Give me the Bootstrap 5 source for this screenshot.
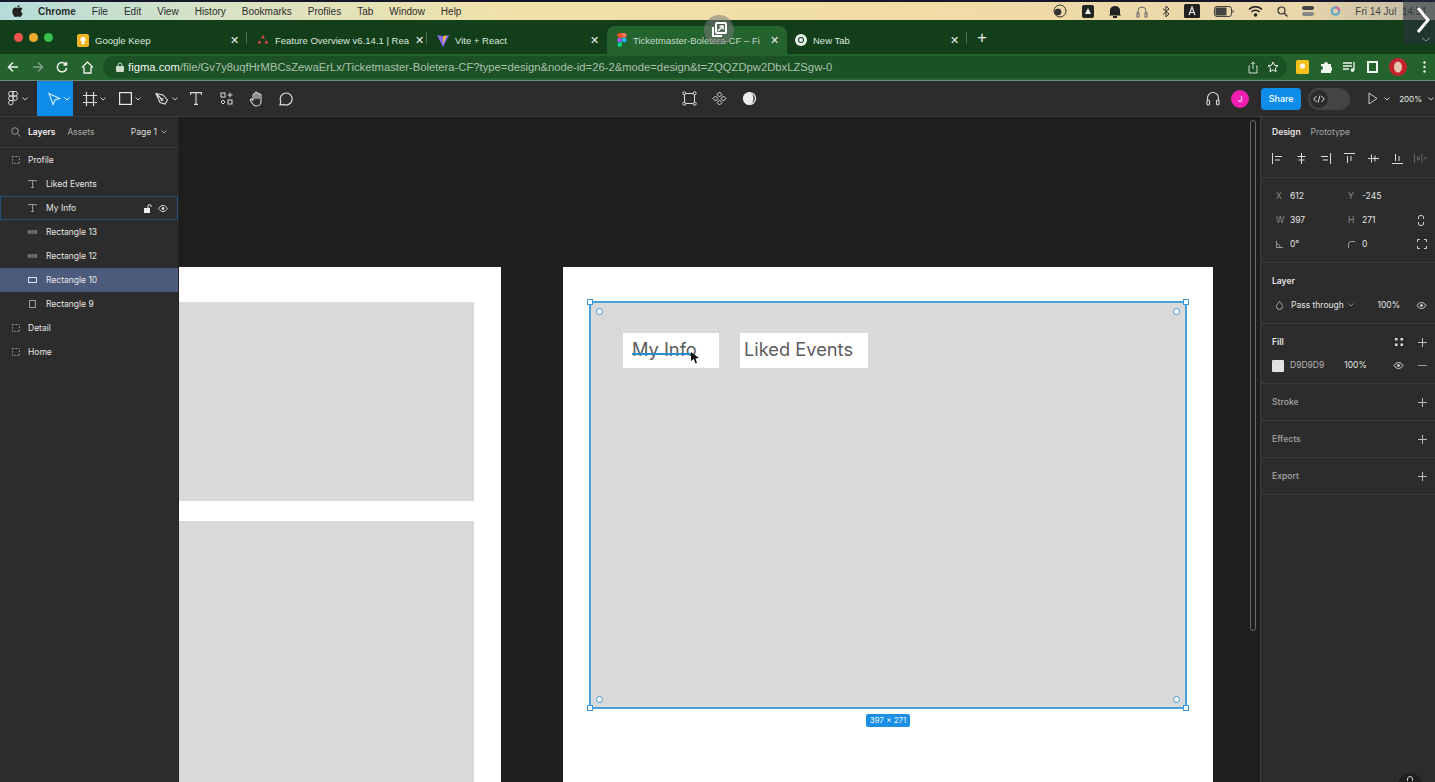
<!DOCTYPE html>
<html lang="en">

<head>
  <meta charset="UTF-8">
  <meta name="viewport" content="width=device-width, initial-scale=1.0">
  <title>Ticketmaster-Boletera-CF – Figma</title>
  <link href="https://cdn.jsdelivr.net/npm/bootstrap@5.3.0/dist/css/bootstrap.min.css" rel="stylesheet">
  <style>
    html, body { height: 100%; overflow: hidden; }
    body { background: #1e1e1e; font-family: Inter, "Liberation Sans", sans-serif; }
    svg { display: block; flex: none; }
    .shot { width: 1435px; height: 782px; position: relative; overflow: hidden; }

    /* mac menu bar */
    .macbar { height: 20px; border-top: 2px solid #16162a; padding-left: 12px; font: 10px "Liberation Sans", sans-serif; color: #2c2c2c;
      background: linear-gradient(90deg, #b4dcda 0, #d6e2c6 200px, #f0e2aa 500px, #f2dca6 900px, #e9d6aa 1300px, #bdb9a8 1435px); }
    .macbar .menus { gap: 16px; }
    .macbar b { font-size: 10px; margin-left: 15px; }
    .status { position: absolute; top: 0; right: 8px; height: 18px; color: #444; }
    .status svg { margin-right: 14px; }

    /* chrome tabs */
    .tabstrip { height: 34px; background: #123f1a; padding-left: 14px; color: #dfe8df; font: 9.5px "Liberation Sans", sans-serif; }
    .lights { gap: 6px; width: 53px; }
    .lights i { width: 9px; height: 9px; border-radius: 50%; }
    .tabitem { width: 180px; height: 28px; margin-top: 6px; padding: 0 6px 0 10px; gap: 6px; border-radius: 8px 8px 0 0; position: relative; }
    .tabitem span { flex: 1; white-space: nowrap; }
    .tabitem em { font-style: normal; font-size: 11px; color: #e8efe8; margin-right: 2px; }
    .tabitem.sep::after { content: ""; position: absolute; right: 0; top: 6px; bottom: 10px; width: 1px; background: #4d6f52; }
    .tabitem.active { background: #24622e; color: #c9dccb; }
    .tabitem.newtab { padding-left: 8px; }
    .plus-tab { color: #eef4ee; font-size: 17px; margin-left: 10px; line-height: 1; }

    /* chrome address row */
    .addrrow { height: 27px; background: #24622e; border-bottom: 1px solid #6e8a72; padding-left: 7px; }
    .navbtns { gap: 12.5px; width: 96px; }
    .omni { width: 1184px; height: 22px; border-radius: 11px; background: #1c5025; padding: 0 8px 0 25px; font: 11.25px "Liberation Sans", sans-serif; color: #a9c3ad; position: relative; }
    .omni strong { color: #f2f5f2; font-weight: 400; }
    .omni .url { flex: 1; white-space: nowrap; overflow: hidden; }
    .exts { gap: 11px; padding-left: 9px; }
    .exts .dotsmenu { margin-left: 5px; }

    /* figma toolbar */
    .figbar { height: 36px; background: #2c2c2c; display: grid; grid-template-columns: 1fr auto 1fr; border-bottom: 1px solid #3b3b3b; }
    .toolb { height: 35px; width: 36px; padding-left: 10px; gap: 3px; }
    .toolb.logo { width: 37px; padding-left: 7px; }
    .toolb.on { background: #0d8ce9; }
    .toolb.plain { width: 30px; padding-left: 0; justify-content: center; }
    .midtools { gap: 15px; padding-left: 4px; }
    .rtools { justify-content: flex-end; font-size: 8px; color: #eee; padding-right: 1px; }
    .jdot { width: 18px; height: 18px; border-radius: 50%; background: #f01fb2; color: #fff; font-size: 8px; margin-left: 11px; }
    .sharebtn { width: 40px; height: 22px; background: #0d8ce9; color: #fff; border-radius: 4px; font-size: 9px; font-weight: 500; margin-left: 12px; }
    .devtoggle { width: 42px; height: 22px; border-radius: 11px; background: #444; margin-left: 7px; margin-right: 18px; padding-left: 2px; }
    .devtoggle span { width: 18px; height: 18px; border-radius: 50%; background: #2c2c2c; }
    .zoomval { margin-left: 9px; margin-right: 6px; }

    /* panels */
    .workarea { height: 665px; }
    .leftpanel { width: 179px; background: #2c2c2c; color: #e6e6e6; font-size: 8.5px; border-right: 1px solid #222; flex: none; z-index: 3; }
    .panelhead { height: 31px; border-bottom: 1px solid #3b3b3b; padding-left: 11px; }
    .panelhead .tabon { font-weight: 600; color: #f2f2f2; margin-left: 7px; }
    .panelhead .taboff { color: #a8a8a8; margin-left: 12px; }
    .panelhead .pagepick { margin-left: auto; margin-right: 11px; color: #ddd; gap: 4px; }
    .layerrow { height: 24px; gap: 8px; padding-left: 12px; }
    .layerrow.child { padding-left: 28px; gap: 9px; }
    .layerrow.hover { box-shadow: inset 0 0 0 1px #27517a; }
    .layerrow.picked { background: #4c5a7c; }
    .layerrow .tail { margin-left: auto; margin-right: 10px; gap: 6px; }

    .canvasarea { flex: 1; position: relative; background: #1e1e1e; overflow: hidden; }
    .sheet { position: absolute; background: #fff; }
    .grayblock { position: absolute; background: #d9d9d9; }
    .scrolltrack { position: absolute; left: 1071px; top: 3px; width: 6px; height: 511px; border: 1px solid #6a6a6a; border-radius: 3px; }
    .pickbox { position: absolute; left: 410px; top: 184px; width: 598px; height: 408px; background: #d9d9d9; border: 2px solid #4aa0da; }
    .tabbox { position: absolute; top: 30px; height: 35px; background: #fff; color: #5c5c5c; font-size: 18.25px; line-height: 32px; white-space: nowrap; }
    .drawline { position: absolute; left: 41px; top: 50px; width: 60px; height: 2px; background: #2a8fd0; }
    .cursorptr { position: absolute; left: 99px; top: 49px; }
    .sqh { position: absolute; width: 6px; height: 6px; background: #fff; border: 1px solid #3a9ad9; }
    .rndh { position: absolute; width: 7px; height: 7px; border-radius: 50%; background: #fff; border: 1px solid #3a9ad9; }
    .sizetag { position: absolute; left: 687px; top: 597px; width: 44px; height: 13px; background: #1a8fe3; color: #e8f4fd; font-size: 8px; line-height: 13px; text-align: center; border-radius: 2px; }

    .rightpanel { width: 175px; background: #2c2c2c; border-left: 1px solid #3b3b3b; color: #e4e4e4; font-size: 8.5px; flex: none; }
    .rhead { height: 31px; padding-left: 11px; gap: 10px; }
    .rhead b { font-weight: 600; }
    .rhead span { color: #a8a8a8; }
    .alignrow { height: 30px; padding: 0 0 9px 11px; gap: 13px; border-bottom: 1px solid #3b3b3b; }
    .geomblock { height: 85px; padding-top: 6px; border-bottom: 1px solid #3b3b3b; }
    .geomrow { height: 24px; position: relative; }
    .geomrow .lab { position: absolute; left: 15px; color: #8d8d8d; }
    .geomrow .val { position: absolute; left: 29px; }
    .geomrow .lab2 { position: absolute; left: 87px; color: #8d8d8d; }
    .geomrow .val2 { position: absolute; left: 101px; }
    .geomrow svg { position: absolute; }
    .secthead { height: 37px; padding: 0 8px 0 11px; border-bottom: 1px solid #3b3b3b; font-weight: 600; color: #9b9b9b; }
    .secthead.lit { border-bottom: 0; color: #e6e6e6; height: 30px; padding-top: 6px; }
    .propline { height: 31px; padding: 0 8px 6px 15px; border-bottom: 1px solid #3b3b3b; }
    .propline.fillrow { height: 30px; }
    .swatch { width: 12px; height: 12px; background: #e3e3e3; border-radius: 1px; margin: 0 -2px 0 -4px; }
    .helpdot { position: absolute; left: 1398px; top: 773px; width: 24px; height: 24px; border-radius: 50%; background: #1e1e1e; z-index: 6; padding: 3px 0 0 9px; }

    /* video overlays */
    .popbtn { position: absolute; left: 704px; top: 15px; width: 30px; height: 30px; border-radius: 50%; background: rgba(120,120,120,.55); z-index: 6; }
    .nextbtn { position: absolute; right: 0; top: 0; width: 32px; height: 44px; background: rgba(40,50,60,.6); z-index: 6; padding-left: 13px; }
  </style>
</head>

<body>
  <div class="shot">
    <!-- video overlay controls -->
    <div class="popbtn d-flex align-items-center justify-content-center">
      <svg width="18" height="18" viewBox="0 0 18 18" fill="none" stroke="#fff" stroke-width="2"><rect x="6" y="2" width="10" height="10" rx="1"/><path d="M3 6v9h9"/><path d="M8 10l5-5M9.500 5H13v3.500" stroke-width="1.500"/></svg>
    </div>
    <div class="nextbtn">
      <svg width="19" height="44" viewBox="0 0 19 44" fill="none" stroke="#fff"><path d="M2 8l10 12L2 32" stroke-width="3"/><path d="M6 38l4 3 4-3" stroke="#8a8f95" stroke-width="1"/></svg>
    </div>
    <div class="helpdot">
      <svg width="6" height="6" viewBox="0 0 6 6" fill="none" stroke="#ccc"><path d="M.5 5V3a2.500 2.500 0 0 1 5 0v2"/></svg>
    </div>

    <!-- mac menu bar -->
    <div class="macbar d-flex align-items-center position-relative">
      <svg width="11" height="12" viewBox="0 0 12 14" fill="#222"><path d="M8.400 0c.1 1.500-1.200 3-2.700 2.900C5.500 1.500 7 .1 8.400 0zM6 3.800c.7 0 1.600-.8 3-.8.600 0 2 .2 2.800 1.500-2.300 1.400-1.900 4.600.2 5.500-.5 1.400-1.900 4-3.200 4-.9 0-1.300-.6-2.500-.6s-1.700.6-2.500.6C2.200 14 0 10.500 0 7.500 0 4.600 1.900 3 3.500 3c1 0 1.900.8 2.500.8z"/></svg>
      <div class="menus d-flex align-items-center">
        <b>Chrome</b><span>File</span><span>Edit</span><span>View</span><span>History</span><span>Bookmarks</span><span>Profiles</span><span>Tab</span><span>Window</span><span>Help</span>
      </div>
      <div class="status d-flex align-items-center">
        <svg width="16" height="14" viewBox="0 0 16 14" fill="none" stroke="#333"><circle cx="8" cy="7" r="6"/><circle cx="6" cy="8" r="3" fill="#333"/></svg>
        <svg width="12" height="13" viewBox="0 0 12 13"><rect width="12" height="13" rx="2" fill="#222"/><path d="M6 3l3 6H3z" fill="#eee"/></svg>
        <svg width="14" height="13" viewBox="0 0 14 13"><path d="M2 9V5a5 4 0 0 1 10 0v4l1 1.500H1z" fill="#222"/><rect x="5" y="11" width="4" height="2" fill="#222"/></svg>
        <svg width="12" height="13" viewBox="0 0 12 13" fill="none" stroke="#666"><path d="M2 9V6a4 4 0 0 1 8 0v3"/><rect x="1" y="8" width="2" height="4"/><rect x="9" y="8" width="2" height="4"/></svg>
        <svg width="8" height="13" viewBox="0 0 8 13" fill="none" stroke="#333"><path d="M1 3.500l6 5.500-3 3V1l3 3-6 5.500"/></svg>
        <svg width="16" height="14" viewBox="0 0 16 14"><rect width="16" height="14" rx="1.500" fill="#222"/><path d="M5 11l3-8 3 8M6 8.500h4" fill="none" stroke="#eee" stroke-width="1.200"/></svg>
        <svg width="20" height="11" viewBox="0 0 20 11" fill="none" stroke="#444"><rect x=".5" y=".5" width="17" height="10" rx="2.500"/><rect x="2" y="2" width="10" height="7" fill="#444"/><path d="M19 4v3"/></svg>
        <svg width="15" height="11" viewBox="0 0 15 11" fill="none" stroke="#222" stroke-width="1.500"><path d="M1 3.500a9 9 0 0 1 13 0M3.500 6a5.500 5.500 0 0 1 8 0"/><circle cx="7.500" cy="9" r="1" fill="#222"/></svg>
        <svg width="11" height="11" viewBox="0 0 11 11" fill="none" stroke="#333" stroke-width="1.200"><circle cx="4.500" cy="4.500" r="3.500"/><path d="M7 7l3.500 3.500"/></svg>
        <svg width="14" height="12" viewBox="0 0 14 12"><rect y="1" width="12" height="4" rx="2" fill="#444"/><rect y="7" width="12" height="4" rx="2" fill="#888"/><circle cx="13.500" cy="9" r="1" fill="#eeb640"/></svg>
        <svg width="11" height="12" viewBox="0 0 12 12" fill="none" stroke-width="2.500"><circle cx="6" cy="6" r="4" stroke="#5fa8c8"/><path d="M6 2a4 4 0 0 1 4 4" stroke="#d56a9a"/></svg>
        <span>Fri 14 Jul&nbsp; 14:51</span>
      </div>
    </div>

    <!-- chrome tabs -->
    <div class="tabstrip d-flex align-items-center">
      <div class="lights d-flex align-items-center">
        <i style="background:#ef5350"></i><i style="background:#f0ad2e"></i><i style="background:#37c24d"></i>
      </div>
      <div class="tabitem sep d-flex align-items-center">
        <svg width="12" height="13" viewBox="0 0 12 13"><rect width="12" height="13" rx="2" fill="#f3b423"/><circle cx="6" cy="5.500" r="2.500" fill="#fff"/><rect x="4.700" y="8" width="2.600" height="2" fill="#fff"/></svg>
        <span>Google Keep</span><em>✕</em>
      </div>
      <div class="tabitem sep d-flex align-items-center">
        <svg width="12" height="10" viewBox="0 0 12 10" fill="#e0474c"><path d="M6 0l2 3.500H4zM2.500 5l2 3.500h-4zM9.500 5l2 3.500h-4z"/></svg>
        <span>Feature Overview v6.14.1 | Rea</span><em>✕</em>
      </div>
      <div class="tabitem d-flex align-items-center">
        <svg width="12" height="13" viewBox="0 0 12 13"><path d="M0 1l6 1.200L12 1 6 13z" fill="#8a6cf0"/><path d="M6.500 2l3-.6L6 10z" fill="#ffc92e"/></svg>
        <span>Vite + React</span><em>✕</em>
      </div>
      <div class="tabitem active d-flex align-items-center">
        <svg width="10" height="14" viewBox="0 0 10 15"><circle cx="7.500" cy="7.500" r="2.500" fill="#1abcfe"/><path d="M2.500 10H5v2.500a2.500 2.500 0 1 1-2.500-2.500z" fill="#0acf83"/><rect y="5" width="5" height="5" rx="2.500" fill="#a259ff"/><path d="M2.500 0H5v5H2.500a2.500 2.500 0 0 1 0-5z" fill="#f24e1e"/><path d="M5 0h2.500a2.500 2.500 0 0 1 0 5H5z" fill="#ff7262"/></svg>
        <span>Ticketmaster-Boletera-CF – Fi</span><em>✕</em>
      </div>
      <div class="tabitem newtab sep d-flex align-items-center">
        <svg width="12" height="12" viewBox="0 0 12 12"><circle cx="6" cy="6" r="6" fill="#e8efe8"/><circle cx="6" cy="6" r="3" fill="#123f1a"/><circle cx="6" cy="6" r="2" fill="#e8efe8"/></svg>
        <span>New Tab</span><em>✕</em>
      </div>
      <span class="plus-tab">+</span>
    </div>

    <!-- chrome address row -->
    <div class="addrrow d-flex align-items-center">
      <div class="navbtns d-flex align-items-center">
        <svg width="12" height="12" viewBox="0 0 12 12" fill="none" stroke="#eef4ee" stroke-width="1.500"><path d="M11 6H1.500M6 1.500L1.500 6 6 10.500"/></svg>
        <svg width="12" height="12" viewBox="0 0 12 12" fill="none" stroke="#7fa085" stroke-width="1.500"><path d="M1 6h9.500M6 1.500L10.500 6 6 10.500"/></svg>
        <svg width="12" height="12" viewBox="0 0 12 12" fill="none" stroke="#eef4ee" stroke-width="1.500"><path d="M10 3.500A4.700 4.700 0 1 0 10.700 7"/><path d="M10.500 1v3h-3" fill="#eef4ee"/></svg>
        <svg width="13" height="13" viewBox="0 0 13 13" fill="none" stroke="#eef4ee" stroke-width="1.300"><path d="M1 6.500L6.500 1 12 6.500M3 6v6h7V6"/></svg>
      </div>
      <div class="omni d-flex align-items-center">
        <svg class="position-absolute" style="left:13px" width="8" height="10" viewBox="0 0 8 10"><rect y="4" width="8" height="6" rx="1" fill="#cfdccf"/><path d="M2 4V3a2 2 0 0 1 4 0v1" fill="none" stroke="#cfdccf"/></svg>
        <span class="url"><strong>figma.com</strong>/file/Gv7y8uqfHrMBCsZewaErLx/Ticketmaster-Boletera-CF?type=design&amp;node-id=26-2&amp;mode=design&amp;t=ZQQZDpw2DbxLZSgw-0</span>
        <svg class="me-2" width="12" height="13" viewBox="0 0 12 13" fill="none" stroke="#cfdccf"><path d="M3 5H2v7h8V5H9M6 8V1M4 3l2-2 2 2"/></svg>
        <svg width="12" height="12" viewBox="0 0 12 12" fill="none" stroke="#eef4ee"><path d="M6 1l1.500 3.300 3.500.4-2.600 2.400.7 3.600L6 8.900l-3.100 1.800.7-3.600L1 4.700l3.500-.4z"/></svg>
      </div>
      <div class="exts d-flex align-items-center">
        <svg width="13" height="14" viewBox="0 0 13 14"><rect width="13" height="14" rx="1.500" fill="#f3c11e"/><circle cx="6.500" cy="6" r="2.500" fill="#fff"/></svg>
        <svg width="12" height="12" viewBox="0 0 12 12" fill="#eef4ee"><path d="M1 3h3a2 2 0 0 1 4 0h3v3a2 2 0 0 1 0 4v2H1V9a2 2 0 0 0 0-4z"/></svg>
        <svg width="13" height="12" viewBox="0 0 13 12" fill="none" stroke="#eef4ee" stroke-width="1.300"><path d="M0 2h9M0 5h9M0 8h6M11 1v8"/><circle cx="9.500" cy="9" r="1.200" fill="#eef4ee"/></svg>
        <svg width="11" height="12" viewBox="0 0 11 12" fill="none" stroke="#eef4ee" stroke-width="2"><rect x="1" y="1" width="9" height="10"/></svg>
        <svg width="18" height="18" viewBox="0 0 18 18"><circle cx="9" cy="9" r="9" fill="#c5222d"/><ellipse cx="9" cy="9" rx="4" ry="5.500" fill="#e3c4ac"/></svg>
        <svg class="dotsmenu" width="3" height="12" viewBox="0 0 3 12" fill="#eef4ee"><circle cx="1.500" cy="1.500" r="1.200"/><circle cx="1.500" cy="6" r="1.200"/><circle cx="1.500" cy="10.500" r="1.200"/></svg>
      </div>
    </div>

    <!-- figma toolbar -->
    <div class="figbar">
      <div class="d-flex align-items-center">
        <div class="toolb logo d-flex align-items-center">
          <svg width="12" height="15" viewBox="0 0 10 15" fill="none" stroke="#ddd"><path d="M5 .5H2.800a2.200 2.200 0 0 0 0 4.500H5zM5 .5h2.200a2.200 2.200 0 0 1 0 4.500H5zM5 5H2.800a2.200 2.200 0 0 0 0 4.500H5zM5 9.500H2.800A2.200 2.200 0 1 0 5 12z"/><circle cx="7.200" cy="7.200" r="2.200"/></svg>
          <svg width="6" height="4" viewBox="0 0 6 4" fill="none" stroke="#ccc"><path d="M.5.500L3 3 5.500.5"/></svg>
        </div>
        <div class="toolb on d-flex align-items-center">
          <svg width="14" height="14" viewBox="0 0 14 14" fill="none" stroke="#cfe8fb" stroke-width="1.200"><path d="M2 1.500l10.500 5-4.500 1.500-2 4.500z"/></svg>
          <svg width="6" height="4" viewBox="0 0 6 4" fill="none" stroke="#e8f4fd"><path d="M.5.500L3 3 5.500.5"/></svg>
        </div>
        <div class="toolb d-flex align-items-center">
          <svg width="14" height="14" viewBox="0 0 14 14" fill="none" stroke="#ddd" stroke-width="1.200"><path d="M3.500 0v14M10.500 0v14M0 3.500h14M0 10.500h14"/></svg>
          <svg width="6" height="4" viewBox="0 0 6 4" fill="none" stroke="#ccc"><path d="M.5.500L3 3 5.500.5"/></svg>
        </div>
        <div class="toolb d-flex align-items-center">
          <svg width="13" height="13" viewBox="0 0 13 13" fill="none" stroke="#e8e8e8" stroke-width="1.200"><rect x=".6" y=".6" width="11.800" height="11.800"/></svg>
          <svg width="6" height="4" viewBox="0 0 6 4" fill="none" stroke="#ccc"><path d="M.5.500L3 3 5.500.5"/></svg>
        </div>
        <div class="toolb d-flex align-items-center">
          <svg width="14" height="14" viewBox="0 0 14 14" fill="none" stroke="#ddd" stroke-width="1.100"><path d="M1 1.500l7 1.500 4.500 5-2.500 4-5-1.500zM1 1.500L6.500 7"/><circle cx="7" cy="7.500" r="1"/></svg>
          <svg width="6" height="4" viewBox="0 0 6 4" fill="none" stroke="#ccc"><path d="M.5.500L3 3 5.500.5"/></svg>
        </div>
        <div class="toolb plain d-flex align-items-center">
          <svg width="12" height="13" viewBox="0 0 12 13" fill="none" stroke="#ddd" stroke-width="1.100"><path d="M.6 3V.6h10.800V3M6 .6v11.800M4 12.400h4"/></svg>
        </div>
        <div class="toolb plain d-flex align-items-center">
          <svg width="13" height="13" viewBox="0 0 13 13" fill="none" stroke="#ddd"><rect x="1" y="1" width="4" height="4"/><path d="M10 .5v5M7.500 3h5"/><path d="M3 8l2 2-2 2-2-2z"/><rect x="8" y="8" width="4" height="4"/></svg>
        </div>
        <div class="toolb plain d-flex align-items-center">
          <svg width="15" height="16" viewBox="0 0 15 16" fill="none" stroke="#ddd" stroke-width="1.100"><path d="M4 9V4a1 1 0 0 1 2 0V2a1 1 0 0 1 2 0v1a1 1 0 0 1 2 0v1a1 1 0 0 1 2 0v6.500A4.500 4.500 0 0 1 7.500 15C5 15 4 13.500 3 12L1.500 9.500C1 8.500 2.500 7.500 3 8.500zM6 4v4M8 3v5M10 4v4"/></svg>
        </div>
        <div class="toolb plain d-flex align-items-center">
          <svg width="14" height="14" viewBox="0 0 14 14" fill="none" stroke="#ddd" stroke-width="1.200"><path d="M7 1a6 6 0 1 1-2.500 11.400L1 13l.8-3.500A6 6 0 0 1 7 1z"/></svg>
        </div>
      </div>
      <div class="midtools d-flex align-items-center">
        <svg width="15" height="15" viewBox="0 0 15 15" fill="none" stroke="#ddd"><rect x="2.500" y="2.500" width="10" height="10"/><rect x=".8" y=".8" width="3" height="3" rx="1.500" fill="#2c2c2c"/><rect x="11.200" y=".8" width="3" height="3" rx="1.500" fill="#2c2c2c"/><rect x=".8" y="11.200" width="3" height="3" rx="1.500" fill="#2c2c2c"/><rect x="11.200" y="11.200" width="3" height="3" rx="1.500" fill="#2c2c2c"/></svg>
        <svg width="15" height="15" viewBox="0 0 15 15" fill="none" stroke="#ddd"><path d="M7.500 1l2.500 2.500-2.500 2.500L5 3.500zM7.500 9l2.500 2.500L7.500 14 5 11.500zM3.500 5L6 7.500 3.500 10 1 7.500zM11.500 5L14 7.500 11.500 10 9 7.500z"/></svg>
        <svg width="15" height="15" viewBox="0 0 15 15"><circle cx="7.500" cy="7.500" r="6" fill="none" stroke="#eee" stroke-width="1.200"/><path d="M7.500 1.500a6 6 0 0 0 0 12 4 6 0 0 0 0-12z" fill="#eee"/></svg>
      </div>
      <div class="rtools d-flex align-items-center">
        <svg width="14" height="15" viewBox="0 0 14 15" fill="none" stroke="#ddd" stroke-width="1.100"><path d="M1.500 10V7a5.500 5.500 0 0 1 11 0v3"/><rect x="1" y="9" width="2.500" height="5" rx="1.200"/><rect x="10.500" y="9" width="2.500" height="5" rx="1.200"/></svg>
        <div class="jdot d-flex align-items-center justify-content-center">J</div>
        <div class="sharebtn d-flex align-items-center justify-content-center">Share</div>
        <div class="devtoggle d-flex align-items-center">
          <span class="d-flex align-items-center justify-content-center"><svg width="12" height="8" viewBox="0 0 12 8" fill="none" stroke="#ddd"><path d="M3.500 1L.8 4l2.700 3M8.500 1l2.700 3-2.700 3M7 .5L5 7.500"/></svg></span>
        </div>
        <svg width="10" height="13" viewBox="0 0 10 13" fill="none" stroke="#ccc"><path d="M1 1l8 5.500L1 12z"/></svg>
        <svg style="margin-left:6px" width="6" height="4" viewBox="0 0 6 4" fill="none" stroke="#ccc"><path d="M.5.500L3 3 5.500.5"/></svg>
        <span class="zoomval">200%</span>
        <svg width="6" height="4" viewBox="0 0 6 4" fill="none" stroke="#ccc"><path d="M.5.500L3 3 5.500.5"/></svg>
      </div>
    </div>

    <div class="workarea d-flex">
      <!-- layers -->
      <div class="leftpanel">
        <div class="panelhead d-flex align-items-center">
          <svg width="10" height="10" viewBox="0 0 10 10" fill="none" stroke="#999"><circle cx="4" cy="4" r="3.300"/><path d="M6.500 6.500L9.500 9.500"/></svg>
          <span class="tabon">Layers</span><span class="taboff">Assets</span>
          <span class="pagepick d-flex align-items-center">Page 1 <svg width="6" height="4" viewBox="0 0 6 4" fill="none" stroke="#aaa"><path d="M.5.500L3 3 5.500.5"/></svg></span>
        </div>
        <div class="layerrow d-flex align-items-center"><svg width="8" height="8" viewBox="0 0 8 8" fill="none" stroke="#999" stroke-dasharray="1.500 1.500"><rect x=".5" y=".5" width="7" height="7"/></svg><span>Profile</span></div>
        <div class="layerrow child d-flex align-items-center"><svg width="9" height="8" viewBox="0 0 9 8" fill="none" stroke="#999"><path d="M.5 1.500V.5h8v1M4.500.5v7M3 7.500h3"/></svg><span>Liked Events</span></div>
        <div class="layerrow child hover d-flex align-items-center"><svg width="9" height="8" viewBox="0 0 9 8" fill="none" stroke="#999"><path d="M.5 1.500V.5h8v1M4.500.5v7M3 7.500h3"/></svg><span>My Info</span>
          <div class="tail d-flex align-items-center">
            <svg width="8" height="9" viewBox="0 0 8 9"><rect y="4" width="6" height="5" fill="#eee"/><path d="M4 4V2a1.500 1.500 0 0 1 3 0v1" fill="none" stroke="#eee"/></svg>
            <svg width="10" height="7" viewBox="0 0 10 7" fill="none" stroke="#ddd"><path d="M.5 3.500C2 1.500 3.500.5 5 .5s3 1 4.500 3C8 5.500 6.500 6.500 5 6.500s-3-1-4.500-3z"/><circle cx="5" cy="3.500" r="1" fill="#ddd"/></svg>
          </div>
        </div>
        <div class="layerrow child d-flex align-items-center"><svg width="9" height="8" viewBox="0 0 9 8"><rect x=".5" y="3" width="8" height="2" fill="none" stroke="#999"/></svg><span>Rectangle 13</span></div>
        <div class="layerrow child d-flex align-items-center"><svg width="9" height="8" viewBox="0 0 9 8"><rect x=".5" y="3" width="8" height="2" fill="none" stroke="#999"/></svg><span>Rectangle 12</span></div>
        <div class="layerrow child picked d-flex align-items-center"><svg width="9" height="8" viewBox="0 0 9 8"><rect x=".5" y="1.500" width="8" height="5" fill="none" stroke="#e0e4ee"/></svg><span>Rectangle 10</span></div>
        <div class="layerrow child d-flex align-items-center"><svg width="9" height="8" viewBox="0 0 9 8"><rect x="1.500" y=".5" width="6" height="7" fill="none" stroke="#999"/></svg><span>Rectangle 9</span></div>
        <div class="layerrow d-flex align-items-center"><svg width="8" height="8" viewBox="0 0 8 8" fill="none" stroke="#999" stroke-dasharray="1.500 1.500"><rect x=".5" y=".5" width="7" height="7"/></svg><span>Detail</span></div>
        <div class="layerrow d-flex align-items-center"><svg width="8" height="8" viewBox="0 0 8 8" fill="none" stroke="#999" stroke-dasharray="1.500 1.500"><rect x=".5" y=".5" width="7" height="7"/></svg><span>Home</span></div>
      </div>

      <!-- canvas: frames sit at free positions here -->
      <div class="canvasarea">
        <div class="sheet" style="left:0;top:150px;width:322px;height:515px"></div>
        <div class="grayblock" style="left:0;top:185px;width:295px;height:199px"></div>
        <div class="grayblock" style="left:0;top:404px;width:295px;height:261px"></div>
        <div class="sheet" style="left:384px;top:150px;width:650px;height:515px"></div>
        <div class="pickbox">
          <div class="tabbox" style="left:32px;width:96px;padding-left:9px">My Info</div>
          <div class="tabbox" style="left:149px;width:128px;padding-left:4px">Liked Events</div>
          <div class="drawline"></div>
          <svg class="cursorptr" width="10" height="12" viewBox="0 0 10 12"><path d="M1 0l8 6-3.500.6L7 11l-1.500.6L3.800 7 1 9z" fill="#111"/></svg>
          <div class="sqh" style="left:-4px;top:-4px"></div>
          <div class="sqh" style="right:-4px;top:-4px"></div>
          <div class="sqh" style="left:-4px;bottom:-4px"></div>
          <div class="sqh" style="right:-4px;bottom:-4px"></div>
          <div class="rndh" style="left:5px;top:5px"></div>
          <div class="rndh" style="right:5px;top:5px"></div>
          <div class="rndh" style="left:5px;bottom:4px"></div>
          <div class="rndh" style="right:5px;bottom:4px"></div>
        </div>
        <div class="sizetag">397 × 271</div>
        <div class="scrolltrack"></div>
      </div>

      <!-- design panel -->
      <div class="rightpanel">
        <div class="rhead d-flex align-items-center"><b>Design</b><span>Prototype</span></div>
        <div class="alignrow d-flex align-items-center">
          <svg width="11" height="11" viewBox="0 0 11 11" fill="none" stroke="#ddd"><path d="M.5 0v11M3 3.500h7M3 7h5"/></svg>
          <svg width="11" height="11" viewBox="0 0 11 11" fill="none" stroke="#ddd"><path d="M5.500 0v11M1.500 3.500h8M2.500 7h6"/></svg>
          <svg width="11" height="11" viewBox="0 0 11 11" fill="none" stroke="#ddd"><path d="M10.500 0v11M1 3.500h7M3 7h5"/></svg>
          <svg width="11" height="11" viewBox="0 0 11 11" fill="none" stroke="#ddd"><path d="M0 .5h11M3.500 3v7M7 3v5"/></svg>
          <svg width="11" height="11" viewBox="0 0 11 11" fill="none" stroke="#ddd"><path d="M0 5.500h11M3.500 1.500v8M7 2.500v6"/></svg>
          <svg width="11" height="11" viewBox="0 0 11 11" fill="none" stroke="#ddd"><path d="M0 10.500h11M3.500 1v7M7 3v5"/></svg>
          <svg width="13" height="9" viewBox="0 0 13 9" fill="none" stroke="#666" style="margin-left:-2px"><path d="M.5 0v9M8 0v9M3.500 3v3h2V3zM10 3l1.500 2L13 3"/></svg>
        </div>
        <div class="geomblock">
          <div class="geomrow d-flex align-items-center">
            <span class="lab">X</span><span class="val">612</span><span class="lab2">Y</span><span class="val2">-245</span>
          </div>
          <div class="geomrow d-flex align-items-center">
            <span class="lab">W</span><span class="val">397</span><span class="lab2">H</span><span class="val2">271</span>
            <svg style="left:157px" width="6" height="11" viewBox="0 0 6 11" fill="none" stroke="#ccc"><path d="M.5 4V2a2.500 1.500 0 0 1 5 0v2M.5 7v2a2.500 1.500 0 0 0 5 0V7"/></svg>
          </div>
          <div class="geomrow d-flex align-items-center">
            <svg style="left:15px" width="7" height="7" viewBox="0 0 7 7" fill="none" stroke="#999"><path d="M.5 0v6.500H7M.5 3C3 3 4 4 4 6.500"/></svg><span class="val">0°</span>
            <svg style="left:87px" width="7" height="7" viewBox="0 0 7 7" fill="none" stroke="#999"><path d="M.5 7V3A2.500 2.500 0 0 1 3 .5h4"/></svg><span class="val2">0</span>
            <svg style="left:156px" width="10" height="10" viewBox="0 0 10 10" fill="none" stroke="#ccc"><path d="M.5 3V.5H3M7 .5h2.500V3M9.500 7v2.500H7M3 9.500H.5V7"/></svg>
          </div>
        </div>
        <div class="secthead lit d-flex align-items-center">Layer</div>
        <div class="propline d-flex align-items-center">
          <svg width="7" height="9" viewBox="0 0 7 9" fill="none" stroke="#aaa"><path d="M3.500.5C5.500 3 6.500 4 6.500 5.500a3 3 0 0 1-6 0C.5 4 1.500 3 3.500.5z"/></svg>
          <span class="ms-2">Pass through</span>
          <svg class="ms-1" width="6" height="4" viewBox="0 0 6 4" fill="none" stroke="#888"><path d="M.5.500L3 3 5.500.5"/></svg>
          <span class="ms-auto me-3">100%</span>
          <svg width="11" height="7" viewBox="0 0 10 7" fill="none" stroke="#ddd"><path d="M.5 3.500C2 1.500 3.500.5 5 .5s3 1 4.500 3C8 5.500 6.500 6.500 5 6.500s-3-1-4.500-3z"/><circle cx="5" cy="3.500" r="1" fill="#ddd"/></svg>
        </div>
        <div class="secthead lit d-flex align-items-center">Fill
          <svg class="ms-auto" width="8" height="8" viewBox="0 0 8 8" fill="#ddd" style="margin-right:15px"><rect width="2.500" height="2.500"/><rect x="5.500" width="2.500" height="2.500"/><rect y="5.500" width="2.500" height="2.500"/><rect x="5.500" y="5.500" width="2.500" height="2.500"/></svg>
          <svg width="9" height="9" viewBox="0 0 9 9" stroke="#bbb"><path d="M4.500 0v9M0 4.500h9"/></svg>
        </div>
        <div class="propline fillrow d-flex align-items-center">
          <span class="swatch"></span><span class="ms-2" style="color:#b5b5b5">D9D9D9</span>
          <span class="ms-3 ps-1">100%</span>
          <svg class="ms-auto" style="margin-right:14px" width="11" height="7" viewBox="0 0 10 7" fill="none" stroke="#ddd"><path d="M.5 3.500C2 1.500 3.500.5 5 .5s3 1 4.500 3C8 5.500 6.500 6.500 5 6.500s-3-1-4.500-3z"/><circle cx="5" cy="3.500" r="1" fill="#ddd"/></svg>
          <svg width="9" height="9" viewBox="0 0 9 9" stroke="#999"><path d="M0 4.500h9"/></svg>
        </div>
        <div class="secthead d-flex align-items-center">Stroke<svg class="ms-auto" width="9" height="9" viewBox="0 0 9 9" stroke="#bbb"><path d="M4.500 0v9M0 4.500h9"/></svg></div>
        <div class="secthead d-flex align-items-center">Effects<svg class="ms-auto" width="9" height="9" viewBox="0 0 9 9" stroke="#bbb"><path d="M4.500 0v9M0 4.500h9"/></svg></div>
        <div class="secthead d-flex align-items-center">Export<svg class="ms-auto" width="9" height="9" viewBox="0 0 9 9" stroke="#bbb"><path d="M4.500 0v9M0 4.500h9"/></svg></div>
      </div>
    </div>
  </div>

  <script src="https://cdn.jsdelivr.net/npm/bootstrap@5.3.0/dist/js/bootstrap.bundle.min.js"></script>
</body>

</html>
